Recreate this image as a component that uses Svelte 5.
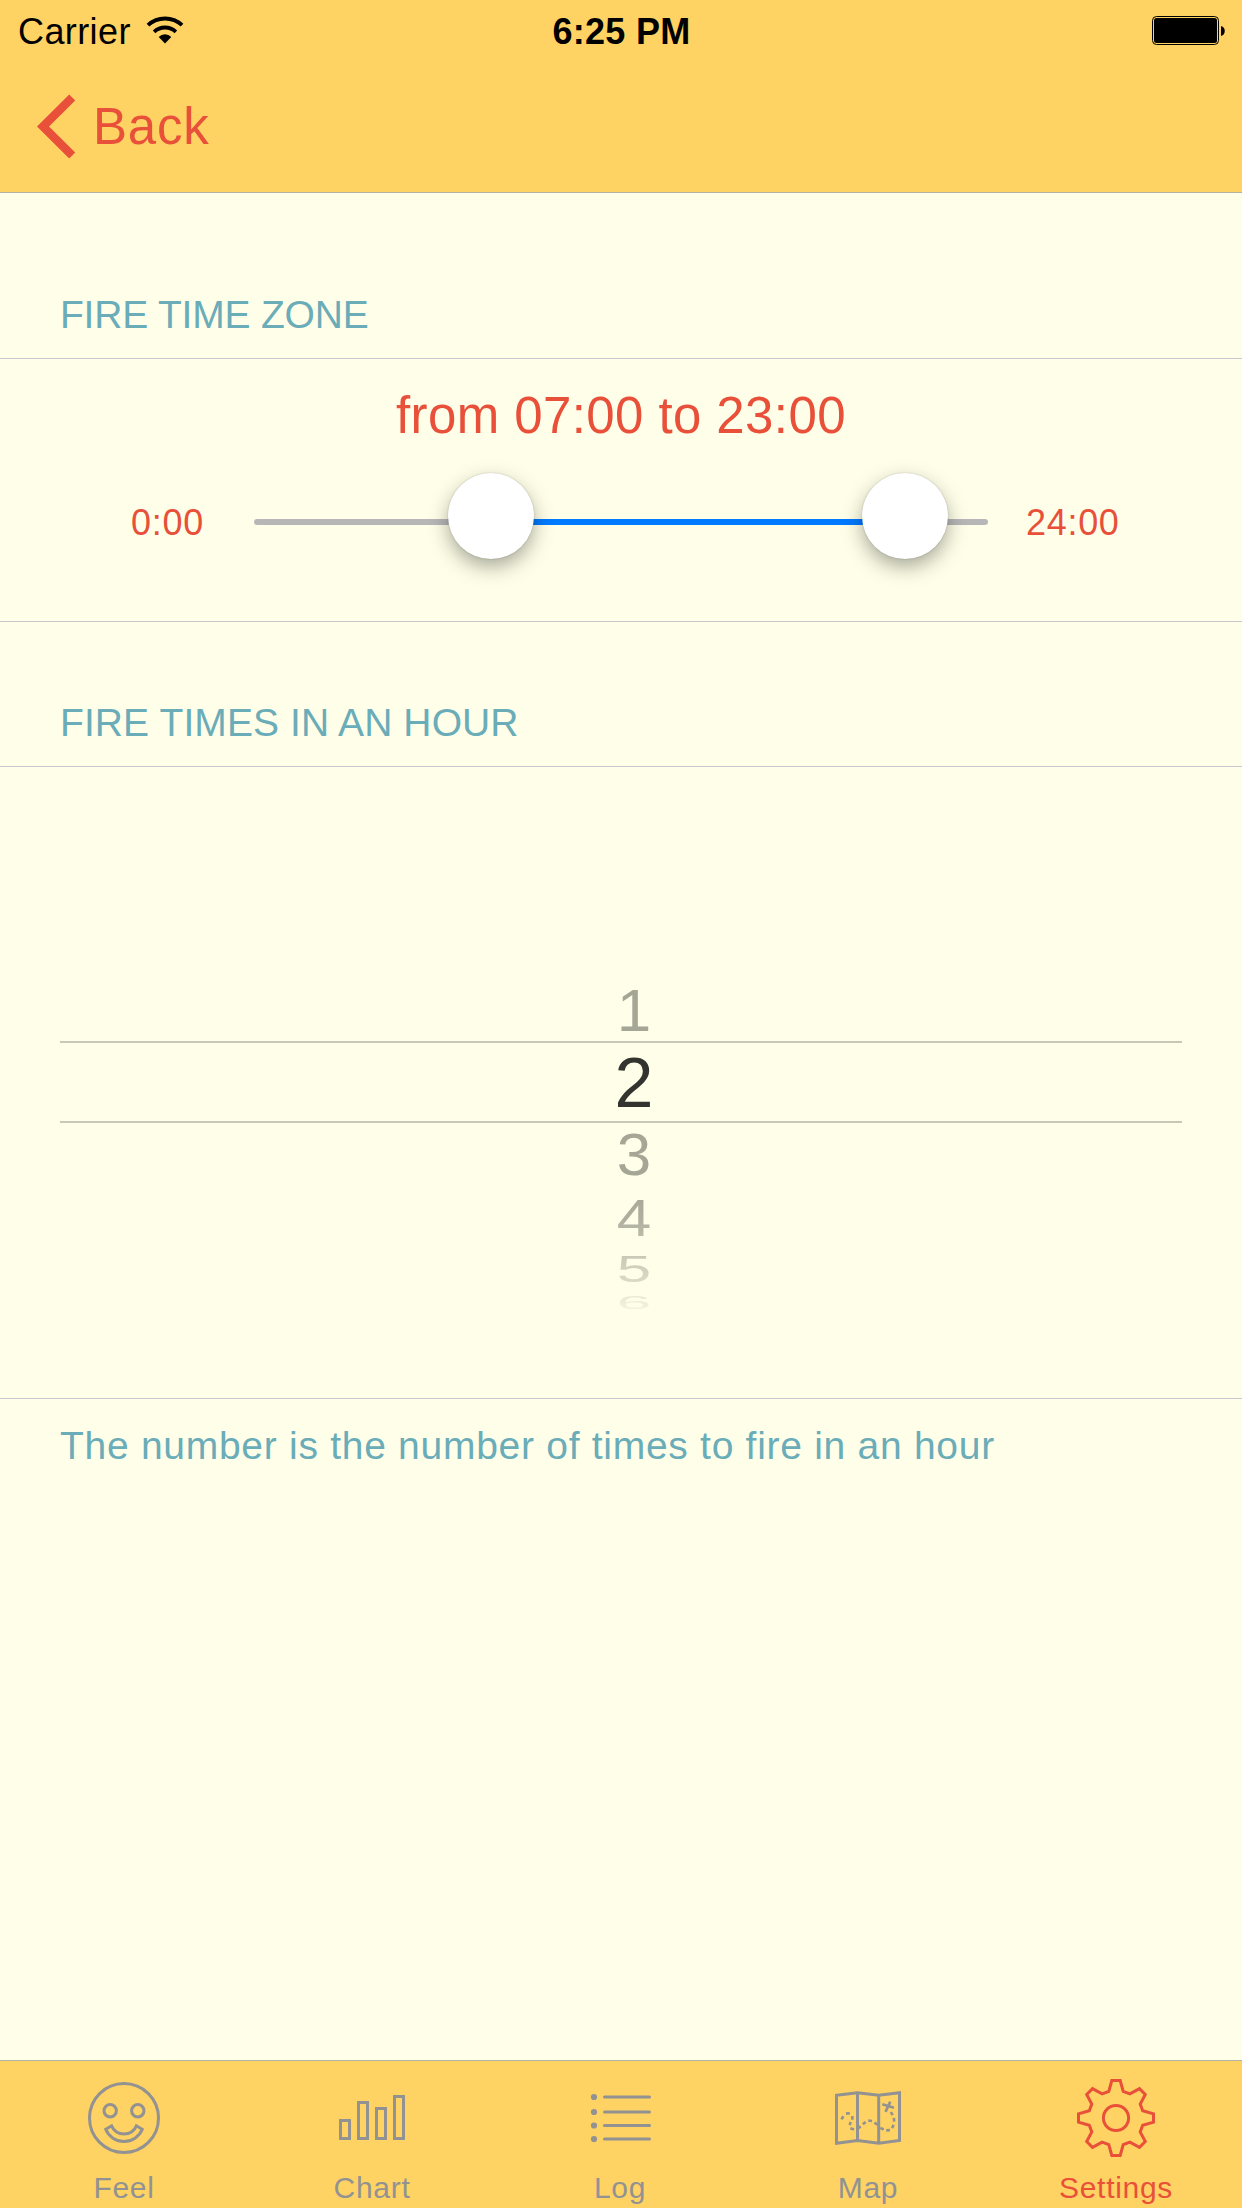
<script lang="ts">
  type TabName = 'Feel' | 'Chart' | 'Log' | 'Map' | 'Settings';

  const tabs: TabName[] = ['Feel', 'Chart', 'Log', 'Map', 'Settings'];
  const counts = [1, 2, 3, 4, 5, 6];

  // thumb centres stay inside the track ends
  const TRACK_INSET = 56;
  const TRACK_TRAVEL = 621;

  let activeTab = $state<TabName>('Settings');
  let from = $state(7);
  let to = $state(23);
  let selected = $state(2);

  const fromX = $derived(TRACK_INSET + (from / 24) * TRACK_TRAVEL);
  const toX = $derived(TRACK_INSET + (to / 24) * TRACK_TRAVEL);

  function formatHour(hour: number): string {
    return `${String(hour).padStart(2, '0')}:00`;
  }
</script>

<div class="screen">
  <header>
    <div class="status">
      <div class="carrier">
        <span>Carrier</span>
        <svg class="wifi" width="38" height="28" viewBox="-19 -27.5 38 28">
          <path d="M-17.05 -18.3A25 25 0 0 1 17.05 -18.3M-10.9 -11.7A16 16 0 0 1 10.9 -11.7" fill="none" stroke="#000" stroke-width="3.8" />
          <path d="M0 0L-6.3 -6.6A9 9 0 0 1 6.3 -6.6Z" />
        </svg>
      </div>
      <span class="clock">6:25 PM</span>
      <svg class="battery" width="73" height="29" viewBox="0 0 73 29">
        <rect x="0.5" y="0.5" width="66" height="28" rx="4" fill="none" stroke="#000" />
        <rect x="2" y="2" width="63" height="25" rx="2.5" />
        <path d="M69 10C74 11 74 19 69 20Z" />
      </svg>
    </div>
    <nav>
      <button class="back">
        <svg width="40" height="64" viewBox="0 0 40 64">
          <path d="M35.2 3.5L6 32.5L35.2 61.5" fill="none" stroke="currentColor" stroke-width="8.5" />
        </svg>
        <span>Back</span>
      </button>
    </nav>
  </header>

  <main>
    <h2 class="first">FIRE TIME ZONE</h2>
    <section class="zone">
      <p class="range">from {formatHour(from)} to {formatHour(to)}</p>
      <div class="slider">
        <span class="min">0:00</span>
        <div class="track">
          <div class="fill" style="left: {fromX}px; width: {toX - fromX}px"></div>
          <div class="thumb" style="left: {fromX}px"></div>
          <div class="thumb" style="left: {toX}px"></div>
        </div>
        <span class="max">24:00</span>
      </div>
    </section>

    <h2>FIRE TIMES IN AN HOUR</h2>
    <section class="picker">
      <div class="wheel">
        {#each counts as count (count)}
          <div class="row row-{count}" class:selected={count === selected}>
            <span>{count}</span>
          </div>
        {/each}
      </div>
    </section>
    <p class="note">The number is the number of times to fire in an hour</p>
  </main>

  <footer>
    {#each tabs as tab (tab)}
      <button class="tab" class:active={tab === activeTab} onclick={() => (activeTab = tab)}>
        <svg width="84" height="84" viewBox="-42 -42 84 84" fill="none" stroke="currentColor" stroke-width="3">
          {#if tab === 'Feel'}
            <circle r="34.5" />
            <circle cx="-13.8" cy="-7.3" r="6.2" />
            <circle cx="13.8" cy="-7.3" r="6.2" />
            <path d="M-18.3 11.3L-12.4 7.8A13.5 13.5 0 0 0 12.4 7.8L18.3 11.3A19.8 19.8 0 0 1 -18.3 11.3Z" />
          {:else if tab === 'Chart'}
            <rect x="-31.5" y="2.5" width="9" height="18" />
            <rect x="-13.5" y="-15.5" width="9" height="36" />
            <rect x="4.5" y="-9.5" width="9" height="30" />
            <rect x="22.5" y="-21.5" width="9" height="42" />
          {:else if tab === 'Log'}
            {#each [-21, -6, 7.5, 21] as y}
              <circle cx="-26" cy={y} r="3.1" fill="currentColor" stroke="none" />
              <path d="M-15.5 {y}H29.5" stroke-linecap="round" />
            {/each}
          {:else if tab === 'Map'}
            <path d="M-31.5 -22.7L-10.5 -25.3L10.7 -22.7L31.5 -25.3V22.5L10.7 25.3L-10.5 22.5L-31.5 25.3ZM-10.5 -25.3V22.5M10.7 -22.7V25.3" />
            <path
              d="M-26.6 1.4L-24.6 -1.8M-22 -4.4L-18.1 -4.8M-15.6 -2L-15.7 1.8M-17.4 3.8L-18.3 7.2M-17.6 10.3L-14 11.5M-10.1 10.5L-7.3 8.4M-5.1 6.3L-2.3 3.9M.2 2.5L4 3M6.5 4.5L9.3 6.8M12.3 9.8L15.7 11.5M18.2 12.4L21.9 12.1M24 10.2L25.7 6.8M26.2 3.6L25.9 -.2M24.6 -2.8L22.9 -6"
              stroke-width="2.6"
            />
            <path d="M14.3 -13.7L26 -10.3M22.3 -16.3L17.5 -6.2" stroke-width="2.7" />
          {:else}
            <path d="M-4.2 -37.5H4.2L7.2 -26.7L13.9 -24.2L23.5 -29.3L29.3 -23.5L24.2 -13.9L26.7 -7.2L37.5 -4.2V4.2L26.7 7.2L24.2 13.9L29.3 23.5L23.5 29.3L13.9 24.2L7.2 26.7L4.2 37.5H-4.2L-7.2 26.7L-13.9 24.2L-23.5 29.3L-29.3 23.5L-24.2 13.9L-26.7 7.2L-37.5 4.2V-4.2L-26.7 -7.2L-24.2 -13.9L-29.3 -23.5L-23.5 -29.3L-13.9 -24.2L-7.2 -26.7Z" />
            <circle r="12.6" />
          {/if}
        </svg>
        <span>{tab}</span>
      </button>
    {/each}
  </footer>
</div>

<style>
  :global(body) {
    margin: 0;
  }

  .screen {
    --bar: #ffd264;
    --paper: #ffffe9;
    --red: #e8503a;
    --teal: #6aacb8;
    --line: #c8c7cc;
    display: flex;
    flex-direction: column;
    width: 1242px;
    height: 2208px;
    overflow: hidden;
    background: var(--paper);
    font-family: "Liberation Sans", Arial, sans-serif;
  }

  h2,
  p {
    margin: 0;
    font-weight: 400;
  }

  button {
    margin: 0;
    padding: 0;
    border: 0;
    background: none;
    font-family: inherit;
  }

  header {
    background: var(--bar);
    border-bottom: 1px solid #b2b2a5;
  }

  .status {
    display: grid;
    grid-template-columns: 1fr auto 1fr;
    align-items: center;
    box-sizing: border-box;
    height: 60px;
    padding: 3px 17px 0 18px;
    font-size: 36px;
    line-height: 42px;
    color: #000;
  }

  .carrier {
    display: flex;
    align-items: center;
    gap: 15px;
    letter-spacing: 0.4px;
  }

  .wifi {
    margin-bottom: 4px;
  }

  .clock {
    font-weight: 700;
    letter-spacing: 0.3px;
  }

  .battery {
    justify-self: end;
    margin-bottom: 2px;
  }

  nav {
    display: flex;
    height: 132px;
    padding-left: 37px;
  }

  .back {
    display: flex;
    align-items: center;
    gap: 16px;
    color: var(--red);
    font-size: 51px;
    letter-spacing: 0.8px;
  }

  main {
    flex: 1;
  }

  h2 {
    display: flex;
    align-items: flex-end;
    box-sizing: border-box;
    height: 144px;
    padding: 0 60px 21px;
    color: var(--teal);
    font-size: 39px;
    line-height: 45px;
    letter-spacing: 0.1px;
  }

  h2.first {
    height: 165px;
    letter-spacing: -0.2px;
  }

  section {
    box-sizing: border-box;
    border-top: 1px solid var(--line);
    border-bottom: 1px solid var(--line);
  }

  .zone {
    height: 264px;
    padding-top: 28px;
    color: var(--red);
  }

  .range {
    font-size: 51px;
    line-height: 58px;
    letter-spacing: 0.4px;
    text-align: center;
  }

  .slider {
    display: flex;
    align-items: center;
    height: 100px;
    margin-top: 27px;
    padding-left: 131px;
    font-size: 36px;
    letter-spacing: 0.7px;
  }

  .min,
  .max {
    padding-top: 2px;
  }

  .min {
    width: 123px;
  }

  .max {
    margin-left: 38px;
  }

  .track {
    position: relative;
    width: 734px;
    height: 6px;
    border-radius: 3px;
    background: #b7b7b7;
  }

  .fill {
    position: absolute;
    top: 0;
    height: 6px;
    background: #007aff;
  }

  .thumb {
    position: absolute;
    top: -46px;
    width: 86px;
    height: 86px;
    margin-left: -43px;
    border-radius: 50%;
    background: #fff;
    box-shadow: 0 8px 20px rgba(0, 0, 0, 0.34), 0 0 2px rgba(0, 0, 0, 0.2);
  }

  .picker {
    height: 633px;
    padding: 212px 60px 0;
  }

  .wheel {
    color: #a6a697;
    font-size: 62px;
    mask-image: linear-gradient(#000 61%, rgba(0, 0, 0, 0.9) 71%, rgba(0, 0, 0, 0.62) 82%, rgba(0, 0, 0, 0.42) 90%, rgba(0, 0, 0, 0.27) 94%, rgba(0, 0, 0, 0.14) 98%);
  }

  .row {
    display: flex;
    align-items: center;
    justify-content: center;
    box-sizing: border-box;
    height: 62px;
    padding-left: 26px;
    line-height: 1;
  }

  .row span {
    transform: scaleY(0.97);
  }

  .row.selected {
    height: 82px;
    padding-top: 2px;
    border-top: 2px solid #c8c8b9;
    border-bottom: 2px solid #c8c8b9;
    color: #33332f;
    font-size: 70px;
  }

  .row.selected span {
    transform: none;
  }

  .row-1,
  .row-3 {
    padding-top: 1px;
  }

  .row-4 {
    height: 65px;
  }

  .row-4 span {
    transform: scaleY(0.85);
  }

  .row-5 {
    height: 39px;
  }

  .row-5 span {
    transform: scaleY(0.59);
  }

  .row-6 {
    height: 26px;
  }

  .row-6 span {
    transform: scaleY(0.31);
  }

  .note {
    padding: 24px 60px 0;
    color: var(--teal);
    font-size: 39px;
    line-height: 45px;
    letter-spacing: 0.72px;
    white-space: nowrap;
  }

  footer {
    display: grid;
    grid-template-columns: repeat(5, 248px);
    height: 147px;
    border-top: 1px solid #b2b2a5;
    background: var(--bar);
  }

  .tab {
    display: flex;
    flex-direction: column;
    align-items: center;
    gap: 10px;
    padding-top: 15px;
    color: #929292;
    font-size: 30px;
    line-height: 36px;
    letter-spacing: 0.7px;
  }

  .tab.active {
    color: var(--red);
  }
</style>
